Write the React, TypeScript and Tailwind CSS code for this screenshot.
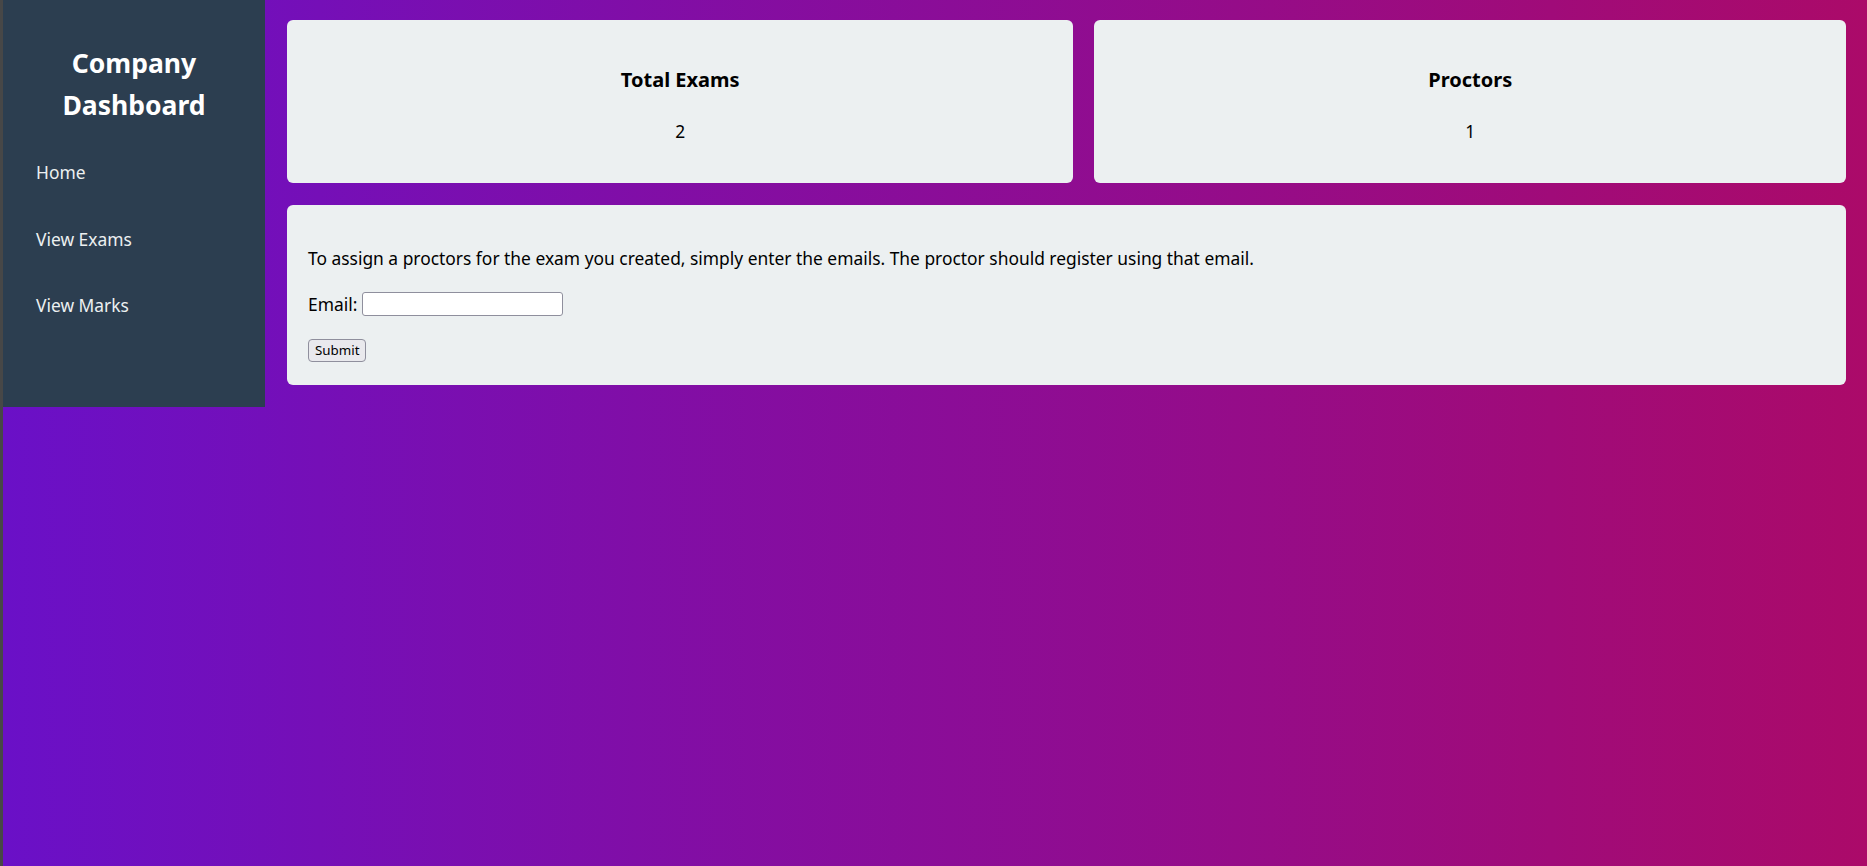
import { useState } from 'react'

const stats = [
  { label: 'Total Exams', value: 2 },
  { label: 'Proctors', value: 1 },
]

const links = ['Home', 'View Exams', 'View Marks']

export default function App() {
  const [email, setEmail] = useState('')

  return (
    <div
      className="min-h-screen w-full flex items-start border-l-[3px] border-[#474747] bg-[linear-gradient(to_right,#6a10c7,#ab0a69)] text-black"
      style={{ fontFamily: '"Noto Sans", "Open Sans", sans-serif' }}
    >
      <aside className="w-[262px] h-[407px] shrink-0 bg-[#2c3e50] text-white">
        <h2 className="pt-[42px] text-center text-[26.5px] leading-[42px] font-bold">
          Company
          <br />
          Dashboard
        </h2>
        <nav className="mt-[13px]">
          {links.map((l) => (
            <a key={l} href="#" className="block pl-[33px] py-[21px] text-[17.4px] leading-[24.5px] text-[#ecf0f1]">
              {l}
            </a>
          ))}
        </nav>
      </aside>

      <main className="flex-1 pt-[20px] pl-[22px] pr-[21px]">
        <div className="flex gap-[21px]">
          {stats.map((s) => (
            <div key={s.label} className="flex-auto h-[163px] rounded-[6px] bg-[#ecf0f1] text-center">
              <h3 className="mt-[48px] text-[20px] leading-[24px] font-bold">{s.label}</h3>
              <p className="mt-[27px] text-[17.4px] leading-[24px]">{s.value}</p>
            </div>
          ))}
        </div>

        <div className="mt-[22px] h-[180px] rounded-[6px] bg-[#ecf0f1] px-[21px] pt-[41px]">
          <p className="text-[17.4px] leading-[24px]">
            To assign a proctors for the exam you created, simply enter the emails. The proctor should register using that
            email.
          </p>
          <form className="mt-[22px]" onSubmit={(e) => e.preventDefault()}>
            <div className="flex items-center h-[24px]">
              <label className="text-[17.4px] leading-[24px]">Email:</label>
              <input
                type="email"
                value={email}
                onChange={(e) => setEmail(e.target.value)}
                className="ml-[5px] w-[201px] h-[24px] rounded-[3px] border border-[#8f8f9d] bg-white px-1 text-[13px]"
              />
            </div>
            <button
              type="submit"
              className="mt-[23px] h-[23px] rounded-[4px] border border-[#8f8f9d] bg-[#e9e9ed] px-[6px] text-[13.33px] leading-[19px]"
            >
              Submit
            </button>
          </form>
        </div>
      </main>
    </div>
  )
}
